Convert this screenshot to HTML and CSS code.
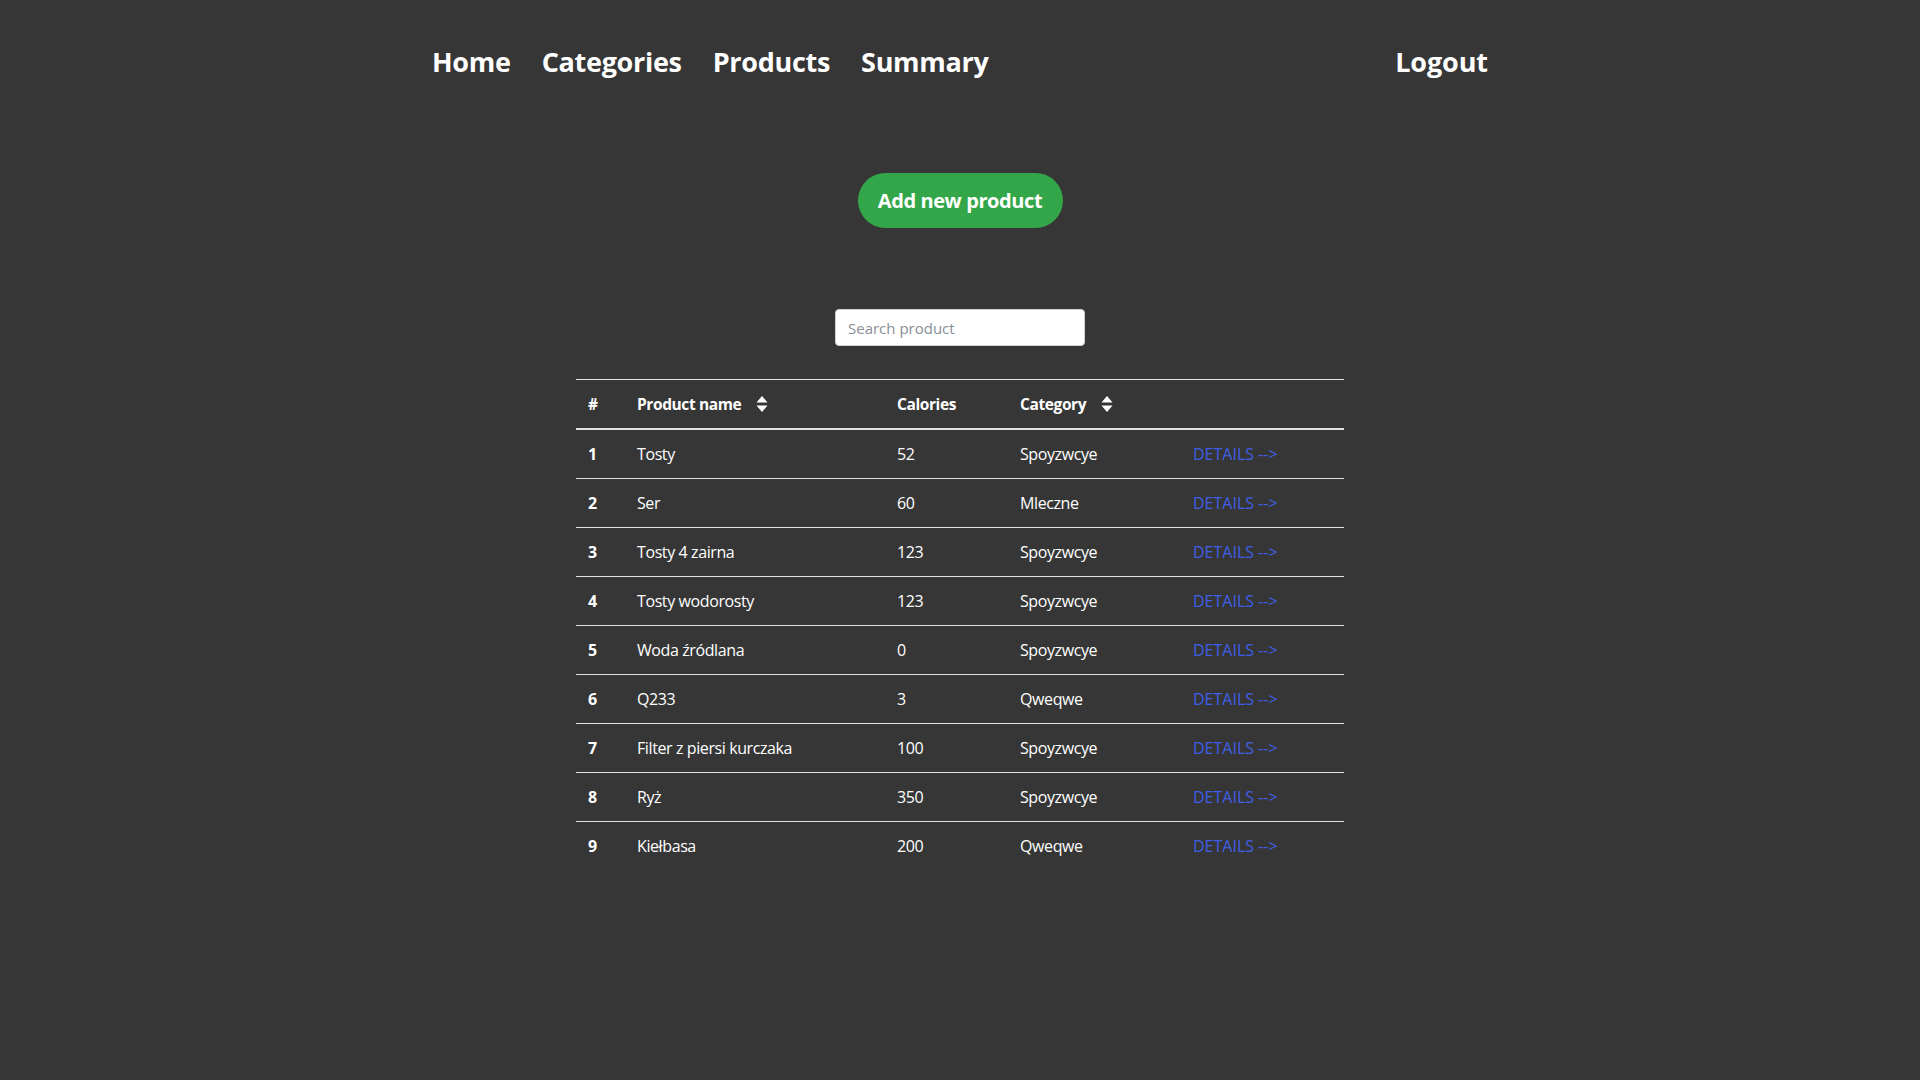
FILE: index.html
```html
<!DOCTYPE html>
<html lang="pl">
<head>
<meta charset="utf-8">
<title>Products</title>
<link rel="stylesheet" href="styles.css">
</head>
<body>
<nav class="navbar">
  <div class="nav-left">
    <a class="nav-link" href="#">Home</a>
    <a class="nav-link" href="#">Categories</a>
    <a class="nav-link" href="#">Products</a>
    <a class="nav-link" href="#">Summary</a>
  </div>
  <a class="nav-link" href="#">Logout</a>
</nav>
<main class="content">
  <button class="btn-add">Add new product</button>
  <input class="search" type="text" placeholder="Search product">
  <table class="products">
    <colgroup>
      <col class="c-num"><col class="c-name"><col class="c-cal"><col class="c-cat"><col class="c-det">
    </colgroup>
    <thead>
      <tr>
        <th>#</th>
        <th>Product name<svg class="sort" viewBox="0 0 12 16"><path d="M6 0 L11.5 6.5 H0.5 Z M0.5 9.5 H11.5 L6 16 Z" fill="#fff"/></svg></th>
        <th>Calories</th>
        <th>Category<svg class="sort" viewBox="0 0 12 16"><path d="M6 0 L11.5 6.5 H0.5 Z M0.5 9.5 H11.5 L6 16 Z" fill="#fff"/></svg></th>
        <th></th>
      </tr>
    </thead>
    <tbody>
      <tr><th>1</th><td>Tosty</td><td>52</td><td>Spoyzwcye</td><td><a class="details" href="#">DETAILS --&gt;</a></td></tr>
      <tr><th>2</th><td>Ser</td><td>60</td><td>Mleczne</td><td><a class="details" href="#">DETAILS --&gt;</a></td></tr>
      <tr><th>3</th><td>Tosty 4 zairna</td><td>123</td><td>Spoyzwcye</td><td><a class="details" href="#">DETAILS --&gt;</a></td></tr>
      <tr><th>4</th><td>Tosty wodorosty</td><td>123</td><td>Spoyzwcye</td><td><a class="details" href="#">DETAILS --&gt;</a></td></tr>
      <tr><th>5</th><td>Woda źródlana</td><td>0</td><td>Spoyzwcye</td><td><a class="details" href="#">DETAILS --&gt;</a></td></tr>
      <tr><th>6</th><td>Q233</td><td>3</td><td>Qweqwe</td><td><a class="details" href="#">DETAILS --&gt;</a></td></tr>
      <tr><th>7</th><td>Filter z piersi kurczaka</td><td>100</td><td>Spoyzwcye</td><td><a class="details" href="#">DETAILS --&gt;</a></td></tr>
      <tr><th>8</th><td>Ryż</td><td>350</td><td>Spoyzwcye</td><td><a class="details" href="#">DETAILS --&gt;</a></td></tr>
      <tr><th>9</th><td>Kiełbasa</td><td>200</td><td>Qweqwe</td><td><a class="details" href="#">DETAILS --&gt;</a></td></tr>
    </tbody>
  </table>
</main>
</body>
</html>
```
FILE: styles.css
```css
* { box-sizing: border-box; }
html, body {
  margin: 0;
  padding: 0;
  background: #363636;
  color: #fff;
  font-family: "Open Sans", "Noto Sans", sans-serif;
  min-height: 100vh;
}
.navbar {
  width: 1056px;
  margin: 0 auto;
  padding-top: 42px;
  display: flex;
  justify-content: space-between;
  align-items: center;
}
.nav-left {
  display: flex;
  gap: 31px;
}
.nav-link {
  color: #fff;
  text-decoration: none;
  font-weight: 700;
  font-size: 27px;
  line-height: 40px;
  letter-spacing: -0.3px;
}
.nav-link:last-child:not(.nav-left .nav-link) {
  letter-spacing: -0.1px;
}
.content {
  display: flex;
  flex-direction: column;
  align-items: center;
}
.btn-add {
  margin-top: 91px;
  width: 205px;
  height: 55px;
  border: none;
  border-radius: 28px;
  background: #33a64a;
  color: #fff;
  font-family: inherit;
  font-weight: 700;
  font-size: 20px;
  letter-spacing: -0.4px;
  cursor: pointer;
}
.search {
  margin-top: 81px;
  width: 250px;
  height: 37px;
  border: 1px solid #ced4da;
  border-radius: 4px;
  padding: 0 12px;
  font-family: inherit;
  font-size: 15px;
  color: #495057;
  background: #fff;
}
.search::placeholder { color: #888e96; }
.products {
  margin-top: 33px;
  width: 768px;
  border-collapse: collapse;
  table-layout: fixed;
  font-size: 16px;
  letter-spacing: -0.4px;
}
.c-num { width: 49px; }
.c-name { width: 260px; }
.c-cal { width: 123px; }
.c-cat { width: 173px; }
.c-det { width: 163px; }
.products th, .products td {
  text-align: left;
  padding: 12px;
  line-height: 24px;
  border-top: 1px solid #dee2e6;
  vertical-align: middle;
}
.products th { font-weight: 700; }
.products thead th {
  border-bottom: 2px solid #dee2e6;
  font-size: 15.5px;
  letter-spacing: -0.4px;
}
.products tbody tr:first-child th,
.products tbody tr:first-child td { border-top: none; }
.sort {
  width: 12px;
  height: 16px;
  margin-left: 15px;
  vertical-align: -2px;
}
.details {
  color: #3f5fe6;
  text-decoration: none;
  letter-spacing: 0;
}
```
